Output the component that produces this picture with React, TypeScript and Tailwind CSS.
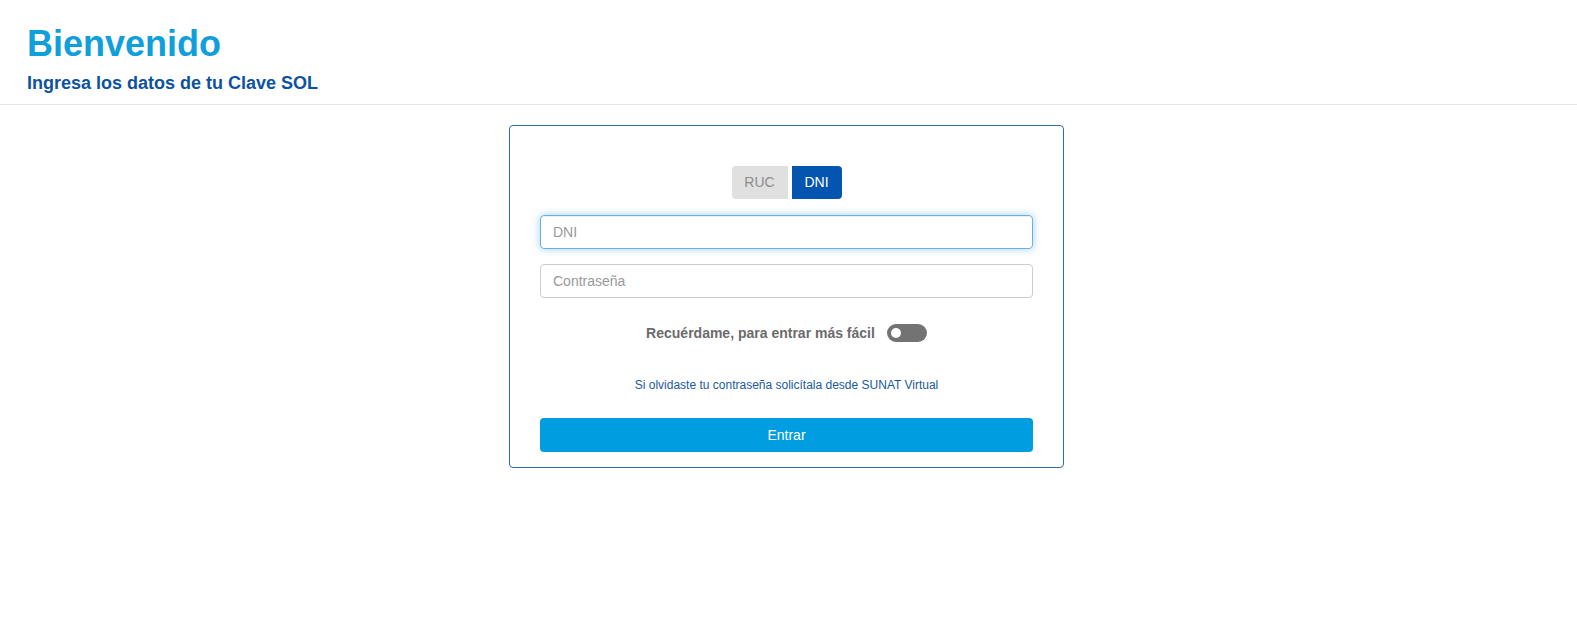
import { useState } from "react";

export default function App() {
  const [tipo, setTipo] = useState<"ruc" | "dni">("dni");
  const [recordar, setRecordar] = useState(false);

  return (
    <div className="min-h-screen bg-white font-['Liberation_Sans',Arial,sans-serif]">
      <header className="border-b border-[#e6e6e6] pl-[27px] pt-[24px] pb-[9px]">
        <h1 className="text-[36px] leading-[40px] font-bold text-[#0fa0dc]">Bienvenido</h1>
        <p className="mt-[7px] text-[18px] leading-[24px] font-bold text-[#0d52a1]">
          Ingresa los datos de tu Clave SOL
        </p>
      </header>

      <div className="flex justify-center pt-[20px] pr-[4px]">
        <div className="w-[555px] rounded-[4px] border border-[#2e6da4] px-[30px] pt-[40px] pb-[15px]">
          <div className="flex justify-center gap-[4px]">
            <button
              onClick={() => setTipo("ruc")}
              className={`h-[33px] w-[56px] rounded-l-[4px] text-[14px] ${
                tipo === "ruc" ? "bg-[#0455b0] text-white" : "bg-[#e0e0e0] text-[#8c8c8c]"
              }`}
            >
              RUC
            </button>
            <button
              onClick={() => setTipo("dni")}
              className={`h-[33px] w-[50px] rounded-r-[4px] text-[14px] ${
                tipo === "dni" ? "bg-[#0455b0] text-white" : "bg-[#e0e0e0] text-[#8c8c8c]"
              }`}
            >
              DNI
            </button>
          </div>

          <input
            placeholder={tipo === "dni" ? "DNI" : "RUC"}
            className="mt-[16px] block h-[34px] w-full rounded-[4px] border border-[#66afe9] px-[12px] text-[14px] text-[#555] outline-none shadow-[inset_0_1px_1px_rgba(0,0,0,0.075),0_0_8px_rgba(102,175,233,0.6)] placeholder:text-[#999]"
          />
          <input
            type="password"
            placeholder="Contraseña"
            className="mt-[15px] block h-[34px] w-full rounded-[4px] border border-[#ccc] px-[12px] text-[14px] text-[#555] outline-none placeholder:text-[#999]"
          />

          <div className="mt-[26px] flex h-[18px] items-center justify-center">
            <span className="text-[14px] font-bold text-[#6b6b6b]">Recuérdame, para entrar más fácil</span>
            <button
              onClick={() => setRecordar(!recordar)}
              className={`ml-[12px] flex h-[18px] w-[40px] items-center rounded-full px-[4px] ${
                recordar ? "justify-end bg-[#009ee0]" : "justify-start bg-[#737373]"
              }`}
            >
              <span className="h-[10px] w-[10px] rounded-full bg-white" />
            </button>
          </div>

          <div className="mt-[35px] text-center text-[12px] leading-[16px] text-[#1a5aa0]">
            Si olvidaste tu contraseña solicítala desde SUNAT Virtual
          </div>

          <button className="mt-[25px] block h-[34px] w-full rounded-[4px] bg-[#009ee0] text-[14px] text-white">
            Entrar
          </button>
        </div>
      </div>
    </div>
  );
}
